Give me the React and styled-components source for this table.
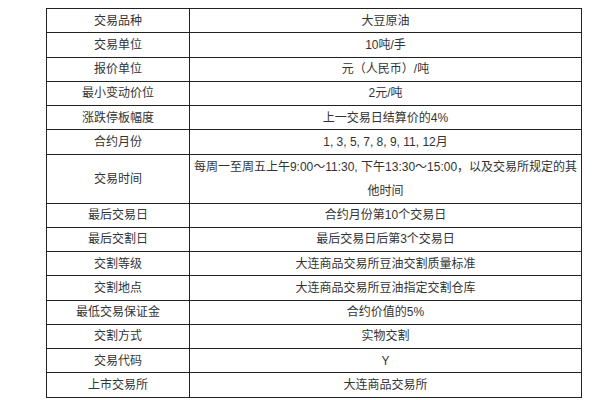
import React from "react";
import styled, { createGlobalStyle } from "styled-components";

const GlobalStyle = createGlobalStyle`
  html, body {
    margin: 0;
    padding: 0;
    background: #ffffff;
  }
  body {
    font-family: "Liberation Sans", "Noto Sans CJK SC", sans-serif;
  }
`;

const Page = styled.div`
  width: 600px;
  height: 400px;
  padding: 8px 0 0 46px;
  box-sizing: border-box;
  overflow: hidden;
`;

const Table = styled.table`
  border-collapse: collapse;
  width: 536px;
  table-layout: fixed;
  color: #333;
  font-size: 12px;
`;

const Row = styled.tr`
  height: ${(p) => (p.$tall ? "48.5px" : "24.25px")};
`;

const Cell = styled.td`
  border: 1px solid #222;
  padding: 0 2px;
  text-align: center;
  vertical-align: middle;
  line-height: 14px;
  white-space: nowrap;
`;

const LabelCell = styled(Cell)`
  width: 138px;
`;

const Line = styled.div`
  height: 24px;
  line-height: 24px;
`;

const rows = [
  ["交易品种", "大豆原油"],
  ["交易单位", "10吨/手"],
  ["报价单位", "元（人民币）/吨"],
  ["最小变动价位", "2元/吨"],
  ["涨跌停板幅度", "上一交易日结算价的4%"],
  ["合约月份", "1, 3, 5, 7, 8, 9, 11, 12月"],
  [
    "交易时间",
    ["每周一至周五上午9:00～11:30, 下午13:30～15:00，以及交易所规定的其", "他时间"],
  ],
  ["最后交易日", "合约月份第10个交易日"],
  ["最后交割日", "最后交易日后第3个交易日"],
  ["交割等级", "大连商品交易所豆油交割质量标准"],
  ["交割地点", "大连商品交易所豆油指定交割仓库"],
  ["最低交易保证金", "合约价值的5%"],
  ["交割方式", "实物交割"],
  ["交易代码", "Y"],
  ["上市交易所", "大连商品交易所"],
];

const App = () => {
  return (
    <>
      <GlobalStyle />
      <Page>
        <Table>
          <tbody>
            {rows.map(([label, value]) => {
              const tall = Array.isArray(value);
              return (
                <Row key={label} $tall={tall}>
                  <LabelCell>{label}</LabelCell>
                  <Cell>
                    {tall ? value.map((line) => <Line key={line}>{line}</Line>) : value}
                  </Cell>
                </Row>
              );
            })}
          </tbody>
        </Table>
      </Page>
    </>
  );
};

export default App;
